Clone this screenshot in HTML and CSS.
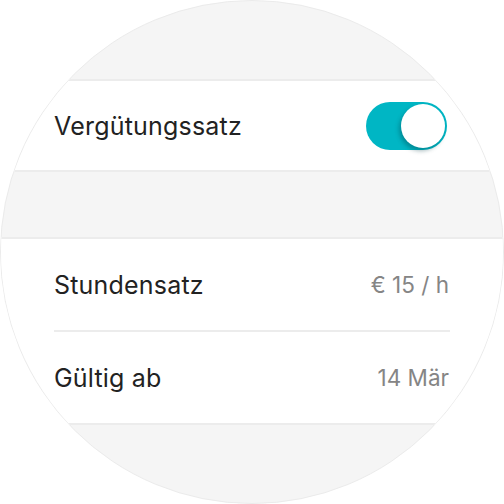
FILE: index.html
```html
<!DOCTYPE html>
<html lang="de">
<head>
<meta charset="utf-8">
<link rel="stylesheet" href="styles.css">
</head>
<body>
<div class="watch">
  <div class="spacer top"></div>
  <section class="group">
    <div class="row">
      <span class="label">Vergütungssatz</span>
      <span class="switch"><span class="knob"></span></span>
    </div>
  </section>
  <div class="spacer mid"></div>
  <section class="group">
    <div class="row">
      <span class="label">Stundensatz</span>
      <span class="value">€ 15 / h</span>
    </div>
    <div class="divider"></div>
    <div class="row">
      <span class="label">Gültig ab</span>
      <span class="value">14 Mär</span>
    </div>
  </section>
  <div class="spacer bottom"></div>
</div>
</body>
</html>
```
FILE: styles.css
```css
html, body {
  margin: 0;
  padding: 0;
  background: #ffffff;
}
body {
  width: 504px;
  height: 504px;
  font-family: Inter, "Noto Sans", sans-serif;
}
.watch {
  width: 502px;
  height: 502px;
  border: 1px solid #ebebeb;
  border-radius: 50%;
  overflow: hidden;
  background: #f5f5f5;
  display: flex;
  flex-direction: column;
}
.spacer.top { height: 78px; flex: none; }
.spacer.mid { height: 65px; flex: none; }
.spacer.bottom { flex: 1; }
.group {
  background: #ffffff;
  border-top: 2px solid #ececec;
  border-bottom: 2px solid #ececec;
  flex: none;
}
.row {
  height: 89px;
  padding: 0 54px 0 53px;
  display: flex;
  align-items: center;
  justify-content: space-between;
}
.group + .spacer + .group .row { height: 91px; }
.divider {
  height: 2px;
  margin: 0 53px 0 53px;
  background: #ececec;
}
.label {
  font-size: 25px;
  color: #222222;
  letter-spacing: 0.2px;
}
.value {
  font-size: 22.5px;
  color: #858585;
}
.switch {
  width: 81px;
  height: 48px;
  border-radius: 24px;
  background: #00b6c4;
  position: relative;
  margin-right: 2px;
}
.knob {
  position: absolute;
  right: 2px;
  top: 2px;
  width: 44px;
  height: 44px;
  border-radius: 50%;
  background: #ffffff;
  box-shadow: -2px 3px 4px rgba(0, 60, 70, 0.35);
}
```
